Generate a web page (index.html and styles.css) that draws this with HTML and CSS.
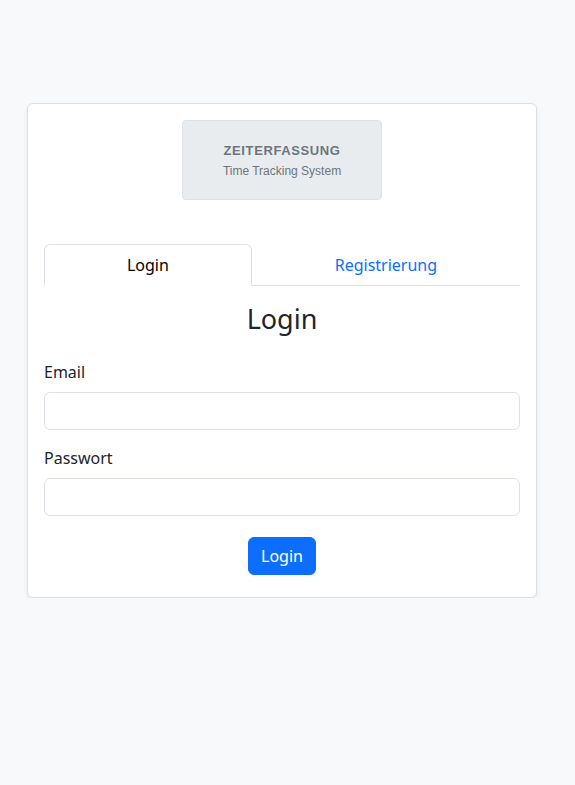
FILE: index.html
```html
<!DOCTYPE html>
<html lang="de">
<head>
<meta charset="utf-8">
<title>Zeiterfassung</title>
<link rel="stylesheet" href="styles.css">
</head>
<body>
<main class="page">
  <div class="card">
    <div class="logo">
      <div class="logo-title">ZEITERFASSUNG</div>
      <div class="logo-sub">Time Tracking System</div>
    </div>
    <ul class="tabs">
      <li class="tab active">Login</li>
      <li class="tab">Registrierung</li>
    </ul>
    <h2 class="heading">Login</h2>
    <form class="form">
      <div class="field">
        <label class="label">Email</label>
        <input class="input" type="email">
      </div>
      <div class="field">
        <label class="label">Passwort</label>
        <input class="input" type="password">
      </div>
      <div class="actions">
        <button type="button" class="btn">Login</button>
      </div>
    </form>
  </div>
</main>
</body>
</html>
```
FILE: styles.css
```css
* { box-sizing: border-box; }
html, body { margin: 0; padding: 0; }
body {
  background: #f8f9fa;
  font-family: "Segoe UI", "Noto Sans", sans-serif;
  font-size: 16px;
  line-height: 1.5;
  color: #212529;
}
.page {
  padding-top: 103px;
  padding-left: 27px;
}
.card {
  width: 510px;
  background: #fff;
  border: 1px solid #dcdfe3;
  border-radius: 6px;
  box-shadow: 0 2px 4px rgba(0,0,0,0.075);
  padding: 16px 16px 22px;
}
.logo {
  width: 200px;
  height: 80px;
  margin: 0 auto;
  background: #e9ecef;
  border: 1px solid #dee2e6;
  border-radius: 4px;
  display: flex;
  flex-direction: column;
  align-items: center;
  justify-content: center;
  font-family: "Liberation Sans", Arial, sans-serif;
  color: #6c757d;
}
.logo-title {
  font-weight: bold;
  font-size: 13px;
  line-height: 18px;
  letter-spacing: 0.6px;
}
.logo-sub {
  font-size: 12px;
  line-height: 16px;
  margin-top: 3px;
}
.tabs {
  list-style: none;
  margin: 44px 0 0;
  padding: 0;
  display: flex;
  border-bottom: 1px solid #dee2e6;
}
.tab {
  flex: 1 1 auto;
  text-align: center;
  padding: 8px 16px;
  border: 1px solid transparent;
  border-top-left-radius: 6px;
  border-top-right-radius: 6px;
  margin-bottom: -1px;
  color: #0d6efd;
}
.tab.active {
  color: #000;
  background: #fff;
  border-color: #dee2e6 #dee2e6 #fff;
}
.heading {
  margin: 17px 0 25px;
  text-align: center;
  font-weight: 400;
  font-size: 27px;
  line-height: 1.2;
  color: #212529;
}
.form { margin: 0; }
.field { margin-bottom: 16px; }
.label {
  display: block;
  margin-bottom: 8px;
}
.input {
  display: block;
  width: 100%;
  height: 38px;
  border: 1px solid #dee2e6;
  border-radius: 6px;
  background: #fff;
  font: inherit;
  padding: 6px 12px;
}
.actions {
  display: flex;
  justify-content: center;
  padding-top: 5px;
}
.btn {
  background: #0d6efd;
  color: #fff;
  border: 1px solid #0d6efd;
  border-radius: 6px;
  font: inherit;
  height: 38px;
  padding: 6px 12px;
}
```
